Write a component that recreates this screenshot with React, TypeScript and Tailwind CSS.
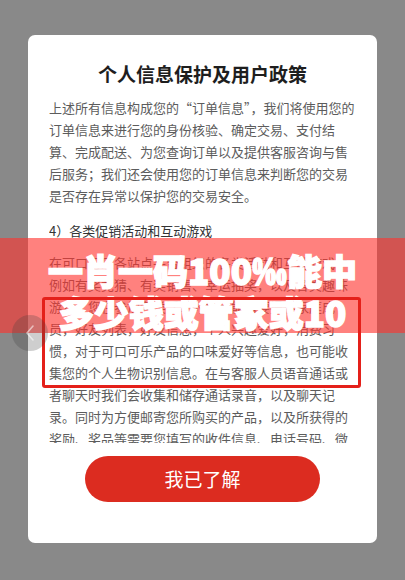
import React from "react";

const intro = [
  "上述所有信息构成您的“订单信息”，我们将使用您的",
  "订单信息来进行您的身份核验、确定交易、支付结",
  "算、完成配送、为您查询订单以及提供客服咨询与售",
  "后服务；我们还会使用您的订单信息来判断您的交易",
  "是否存在异常以保护您的交易安全。",
];

const promo = [
  "在可口可乐各站点平台组织的各类活动和互动游戏中，",
  "例如有奖竞猜、有奖销售、幸运抽奖，以及各类趣味",
  "游戏，您在参加各类活动时您可能需要提供家庭成",
  "员，好友列表，好友信息，个人兴趣爱好，消费习",
  "惯，对于可口可乐产品的口味爱好等信息，也可能收",
  "集您的个人生物识别信息。在与客服人员语音通话或",
  "者聊天时我们会收集和储存通话录音，以及聊天记",
  "录。同时为方便邮寄您所购买的产品，以及所获得的",
  "奖励、奖品等需要您填写的收件信息、电话号码、微",
  "信号等信息。",
];

const font = { fontFamily: '"Noto Sans CJK SC", "Noto Sans", sans-serif' };

export default function App() {
  return (
    <div
      className="relative w-[405px] h-[580px] overflow-hidden bg-[#898989]"
      style={font}
    >
      {/* 弹窗 */}
      <div className="mx-[28px] mt-[35px] h-[508px] rounded-[7px] bg-white px-[21px] pt-[25px] flex flex-col">
        <h1 className="text-center text-[19px] leading-[28px] font-bold text-[#1e1e1e] mb-[9px]">
          个人信息保护及用户政策
        </h1>

        <div className="h-[346px] overflow-hidden text-[13px] leading-[22px] text-[#5c5c5c]">
          {intro.map((l) => (
            <p key={l} className="whitespace-nowrap">
              {l}
            </p>
          ))}
          <p className="mt-[13px] mb-[10px] whitespace-nowrap text-[#333]">
            4）各类促销活动和互动游戏
          </p>
          {promo.map((l) => (
            <p key={l} className="whitespace-nowrap">
              {l}
            </p>
          ))}
        </div>

        <button className="mt-[13px] mx-auto w-[235px] h-[46px] rounded-full bg-[#dc2c20] text-white text-[19px]">
          我已了解
        </button>
      </div>

      {/* 红色横幅 */}
      <div className="absolute left-0 right-0 top-[238px] h-[95px] overflow-hidden bg-[rgba(255,52,46,0.62)] flex flex-col items-center pt-[11px]">
        <p className="text-white text-[35px] leading-[42px] font-black whitespace-nowrap [-webkit-text-stroke:1.5px_white]">
          一肖一码100‰能中
        </p>
        <p className="text-white text-[35px] leading-[42px] font-black whitespace-nowrap [-webkit-text-stroke:1.5px_white]">
          多少钱或管家或10
        </p>
      </div>

      {/* 红框 */}
      <div className="absolute left-[42px] top-[297px] w-[319px] h-[91px] border-[3px] border-[#e4201a] rounded-[3px]" />

      {/* 左侧返回圆钮 */}
      <div className="absolute left-[12px] top-[315px] w-[36px] h-[36px] rounded-full bg-[rgba(60,60,60,0.25)] flex items-center justify-center">
        <svg width="12" height="18" viewBox="0 0 12 18" fill="none">
          <path
            d="M9 2 L3 9 L9 16"
            stroke="rgba(255,255,255,0.55)"
            strokeWidth="1.6"
            strokeLinecap="round"
            strokeLinejoin="round"
          />
        </svg>
      </div>
    </div>
  );
}
